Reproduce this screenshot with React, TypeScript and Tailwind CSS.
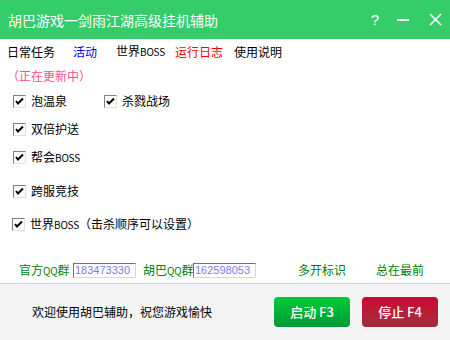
import { ReactNode } from "react";

const font = { fontFamily: '"Noto Sans CJK SC", "Noto Sans", sans-serif' };

// the original uses a narrow bitmap font for latin letters
function Latin({ children }: { children: ReactNode }) {
  return <span className="text-[10px] tracking-[-0.2px]">{children}</span>;
}

function Check({ children, className = "" }: { children: ReactNode; className?: string }) {
  return (
    <div className={"flex items-center " + className}>
      <div className="w-[13px] h-[13px] border border-t-[#808080] border-l-[#808080] border-b-[#e0e0e0] border-r-[#e0e0e0] bg-white flex items-center justify-center">
        <svg width="9" height="9" viewBox="0 0 9 9">
          <path d="M1 4 L3 6.5 L8 1.5" stroke="#000" strokeWidth="2" fill="none" />
        </svg>
      </div>
      <span className="ml-[5px] text-[12px] leading-[14px] text-black whitespace-nowrap">{children}</span>
    </div>
  );
}

function QQBox({ value }: { value: string }) {
  return (
    <div className="shrink-0 w-[63px] h-[15px] border border-t-[#707070] border-l-[#707070] border-b-[#d8d8d8] border-r-[#d8d8d8] bg-white text-[11px] leading-[13px] text-[#7b7bf0] pl-[1px] overflow-hidden" style={{ fontFamily: '"Liberation Sans", sans-serif' }}>
      {value}
    </div>
  );
}

export default function App() {
  return (
    <div className="w-[450px] h-[340px] bg-white flex flex-col overflow-hidden" style={font}>
      {/* title bar */}
      <div className="h-[39px] bg-[#35cc6a] flex items-center text-white shrink-0">
        <span className="pl-[8px] text-[14px] leading-[16px]">胡巴游戏一剑雨江湖高级挂机辅助</span>
        <div className="ml-auto flex items-center">
          <span className="text-[15px] leading-[16px] mr-[18px]" style={{ fontFamily: '"Liberation Sans", sans-serif' }}>?</span>
          <div className="w-[12px] h-[2px] bg-white mr-[20px]" />
          <svg width="13" height="13" viewBox="0 0 13 13" className="mr-[8px]">
            <path d="M1 1 L12 12 M12 1 L1 12" stroke="#fff" strokeWidth="1.6" />
          </svg>
        </div>
      </div>

      {/* menu */}
      <div className="h-[25px] flex items-center text-[12px] leading-[14px] pl-[7px] shrink-0 whitespace-nowrap">
        <span className="w-[66px] text-black">日常任务</span>
        <span className="w-[43px] text-[#0000ff]">活动</span>
        <span className="w-[59px] text-black">世界<Latin>BOSS</Latin></span>
        <span className="w-[59px] text-[#ff0000]">运行日志</span>
        <span className="text-black">使用说明</span>
      </div>

      <div className="pl-[7px] text-[12px] leading-[14px] text-[#ff4f8b] mt-[5px]">（正在更新中）</div>

      {/* options */}
      <div className="flex flex-col pl-[13px]">
        <div className="flex mt-[11px]">
          <Check className="w-[91px]">泡温泉</Check>
          <Check>杀戮战场</Check>
        </div>
        <Check className="mt-[14px]">双倍护送</Check>
        <Check className="mt-[14px]">帮会<Latin>BOSS</Latin></Check>
        <Check className="mt-[19px]">跨服竞技</Check>
        <Check className="mt-[19px] -ml-[1px]">世界<Latin>BOSS</Latin>（击杀顺序可以设置）</Check>
      </div>

      {/* qq row */}
      <div className="mt-[30px] flex items-center text-[12px] leading-[14px] text-[#008000] pl-[19px] h-[16px] whitespace-nowrap">
        <span className="w-[54px] shrink-0">官方<Latin>QQ</Latin>群</span>
        <QQBox value="183473330" />
        <span className="ml-[7px] w-[50px] shrink-0">胡巴<Latin>QQ</Latin>群</span>
        <QQBox value="162598053" />
        <span className="ml-[42px] w-[78px] shrink-0">多开标识</span>
        <span>总在最前</span>
      </div>

      {/* footer */}
      <div className="mt-[5px] flex-1 bg-[#f4f4f4] border-t border-[#a8f5a0] flex items-center">
        <span className="pl-[32px] text-[12px] leading-[14px] text-black">欢迎使用胡巴辅助，祝您游戏愉快</span>
        <div className="ml-auto flex mr-[12px] mb-[1px]">
          <button className="w-[76px] h-[30px] rounded-[4px] bg-gradient-to-b from-[#00cc3a] to-[#009933] text-white text-[13px] font-medium">启动 F3</button>
          <button className="ml-[12px] w-[76px] h-[30px] rounded-[4px] bg-gradient-to-b from-[#cc0033] to-[#a32a3a] text-white text-[13px] font-medium">停止 F4</button>
        </div>
      </div>
    </div>
  );
}
